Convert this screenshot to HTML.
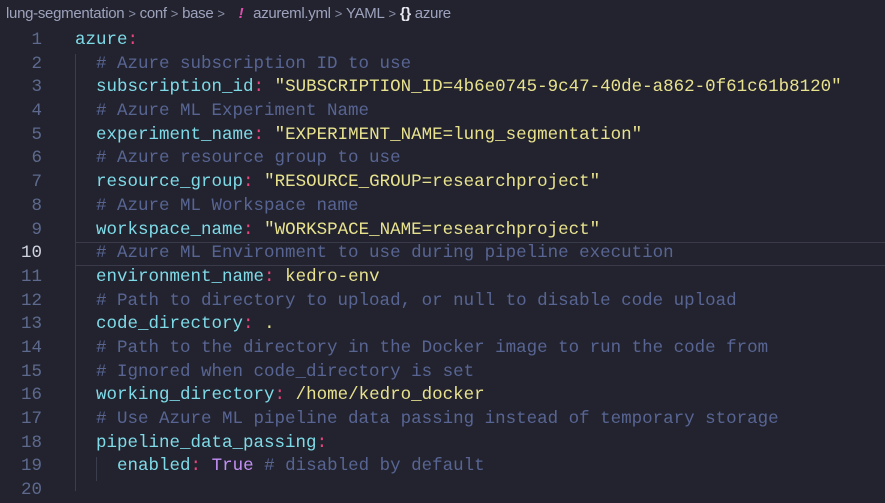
<!DOCTYPE html>
<html><head><meta charset="utf-8"><style>
body{margin:0;width:885px;height:489px;background:#22232e;overflow:hidden;font-family:"Liberation Mono",monospace;}
.bc{position:absolute;top:5px;left:6px;font:15px "Liberation Sans",sans-serif;color:#9ea3bd;white-space:nowrap;letter-spacing:-0.3px}
.bc .s{color:#8a8fa8;margin:0 4px;font-size:13px}
.code{position:absolute;top:29px;left:0;width:885px;font-size:17.5px;}
.l{height:23.7px;line-height:23.7px;white-space:pre;position:relative}
.n{display:inline-block;width:42px;text-align:right;color:#5d6a8e;margin-right:33px}
.cur .n{color:#d0d4e0}
.cur:after{content:"";position:absolute;left:75px;right:0;top:0;bottom:0;border:1px solid #393b4b;border-right:none}
.k{color:#7fdbe8}.c{color:#586593}.s1{color:#e8e28e}.p{color:#e8457e}.t{color:#c490f5}
.g{position:absolute;width:1px;background:#3b3d4d}
</style></head><body>
<div class="bc">lung-segmentation<span class="s">&gt;</span>conf<span class="s">&gt;</span>base<span class="s">&gt;</span> <b style="color:#e04fb0;font-style:italic;margin:0 6px">!</b> azureml.yml<span class="s">&gt;</span>YAML<span class="s">&gt;</span><b style="color:#e8e8f0">{}</b> azure</div>
<div class="g" style="left:75px;top:54px;height:437px"></div>
<div class="g" style="left:96px;top:457px;height:24px"></div>
<div class="code">
<div class="l"><span class="n">1</span><span class="k">azure</span><span class="p">:</span></div>
<div class="l"><span class="n">2</span>  <span class="c"># Azure subscription ID to use</span></div>
<div class="l"><span class="n">3</span>  <span class="k">subscription_id</span><span class="p">:</span> <span class="s1">"SUBSCRIPTION_ID=4b6e0745-9c47-40de-a862-0f61c61b8120"</span></div>
<div class="l"><span class="n">4</span>  <span class="c"># Azure ML Experiment Name</span></div>
<div class="l"><span class="n">5</span>  <span class="k">experiment_name</span><span class="p">:</span> <span class="s1">"EXPERIMENT_NAME=lung_segmentation"</span></div>
<div class="l"><span class="n">6</span>  <span class="c"># Azure resource group to use</span></div>
<div class="l"><span class="n">7</span>  <span class="k">resource_group</span><span class="p">:</span> <span class="s1">"RESOURCE_GROUP=researchproject"</span></div>
<div class="l"><span class="n">8</span>  <span class="c"># Azure ML Workspace name</span></div>
<div class="l"><span class="n">9</span>  <span class="k">workspace_name</span><span class="p">:</span> <span class="s1">"WORKSPACE_NAME=researchproject"</span></div>
<div class="l cur"><span class="n">10</span>  <span class="c"># Azure ML Environment to use during pipeline execution</span></div>
<div class="l"><span class="n">11</span>  <span class="k">environment_name</span><span class="p">:</span> <span class="s1">kedro-env</span></div>
<div class="l"><span class="n">12</span>  <span class="c"># Path to directory to upload, or null to disable code upload</span></div>
<div class="l"><span class="n">13</span>  <span class="k">code_directory</span><span class="p">:</span> <span class="s1">.</span></div>
<div class="l"><span class="n">14</span>  <span class="c"># Path to the directory in the Docker image to run the code from</span></div>
<div class="l"><span class="n">15</span>  <span class="c"># Ignored when code_directory is set</span></div>
<div class="l"><span class="n">16</span>  <span class="k">working_directory</span><span class="p">:</span> <span class="s1">/home/kedro_docker</span></div>
<div class="l"><span class="n">17</span>  <span class="c"># Use Azure ML pipeline data passing instead of temporary storage</span></div>
<div class="l"><span class="n">18</span>  <span class="k">pipeline_data_passing</span><span class="p">:</span></div>
<div class="l"><span class="n">19</span>    <span class="k">enabled</span><span class="p">:</span> <span class="t">True</span> <span class="c"># disabled by default</span></div>
<div class="l"><span class="n">20</span></div>
</div>
</body></html>
